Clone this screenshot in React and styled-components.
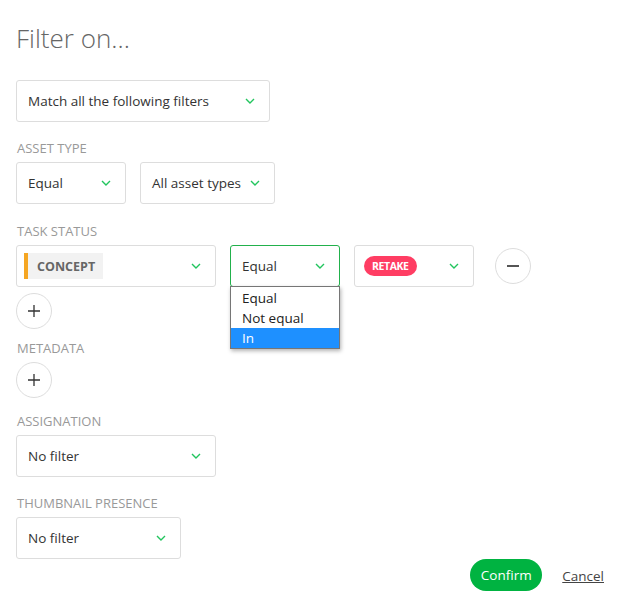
import React from "react";
import styled, { createGlobalStyle } from "styled-components";

const Global = createGlobalStyle`
  html, body { margin: 0; padding: 0; background: #fff; }
  body { font-family: "Open Sans", "Lato", sans-serif; color: #333; }
  * { box-sizing: border-box; }
`;

const Page = styled.div`
  width: 626px;
  height: 603px;
  padding: 20px 16px 0 16px;
  display: flex;
  flex-direction: column;
  position: relative;
`;

const Title = styled.h1`
  margin: 0;
  font-size: 26px;
  font-weight: 300;
  color: #666;
  line-height: 36px;
  letter-spacing: 0;
`;

const Label = styled.div`
  margin-top: ${(p) => p.$mt ?? 17}px;
  margin-bottom: 5px;
  margin-left: 1px;
  font-size: 13px;
  line-height: 18px;
  color: #999;
  text-transform: uppercase;
`;

const Row = styled.div`
  display: flex;
  align-items: center;
  gap: 14px;
  margin-top: ${(p) => p.$mt || 0}px;
`;

const SelectBox = styled.div`
  position: relative;
  width: ${(p) => p.$w}px;
  height: 42px;
  border: 1px solid ${(p) => (p.$focus ? "#22b14c" : "#ddd")};
  border-radius: 3px;
  display: flex;
  align-items: center;
  justify-content: space-between;
  padding: 0 14px 0 ${(p) => p.$pl ?? 11}px;
  font-size: 13.5px;
  color: #333;
  background: #fff;
`;

const Chevron = () => (
  <svg width="10" height="6" viewBox="0 0 10 6" fill="none">
    <path d="M1 1l4 4 4-4" stroke="#22c55e" strokeWidth="1.4" />
  </svg>
);

const StatusTag = styled.span`
  display: inline-flex;
  align-items: center;
  height: 26px;
  padding: 0 8px 0 9px;
  background: #f2f2f2;
  border-left: 4px solid #f5a623;
  font-size: 12.5px;
  font-weight: 700;
  color: #666;
  margin-left: -4px;
`;

const Pill = styled.span`
  display: inline-flex;
  align-items: center;
  height: 20px;
  padding: 0 8px;
  border-radius: 10px;
  background: #ff3d63;
  color: #fff;
  font-size: 10.5px;
  font-weight: 700;
  letter-spacing: -0.4px;
`;

const CircleButton = styled.button`
  width: 36px;
  height: 36px;
  border-radius: 50%;
  border: 1px solid #ddd;
  background: #fff;
  display: flex;
  align-items: center;
  justify-content: center;
  padding: 0;
  flex-shrink: 0;
  margin-top: ${(p) => p.$mt || 0}px;
  margin-left: ${(p) => p.$ml || 0}px;
`;

const Menu = styled.ul`
  position: absolute;
  top: 100%;
  left: -1px;
  width: 110px;
  margin: 0;
  padding: 1px 0 0;
  list-style: none;
  background: #fff;
  border: 1px solid #767676;
  box-shadow: 1px 2px 4px rgba(0, 0, 0, 0.3);
  z-index: 2;
`;

const MenuItem = styled.li`
  height: 20px;
  line-height: 20px;
  padding-left: 11px;
  font-size: 13.5px;
  color: ${(p) => (p.$active ? "#fff" : "#222")};
  background: ${(p) => (p.$active ? "#1e90ff" : "transparent")};
`;

const Footer = styled.div`
  display: flex;
  justify-content: flex-end;
  align-items: center;
  gap: 20px;
  margin-top: 0;
  padding-right: 6px;
`;

const Confirm = styled.button`
  height: 32px;
  width: 72px;
  padding: 0;
  border: none;
  border-radius: 16px;
  background: #00b341;
  color: #fff;
  font-family: inherit;
  font-size: 13.5px;
  font-weight: 500;
`;

const Cancel = styled.a`
  font-size: 13.5px;
  color: #444;
  text-decoration: underline;
  margin-top: 2px;
`;

const Plus = () => (
  <svg width="12" height="12" viewBox="0 0 12 12">
    <path d="M6 0v12M0 6h12" stroke="#333" strokeWidth="1.3" />
  </svg>
);

const Minus = () => (
  <svg width="12" height="12" viewBox="0 0 12 12">
    <path d="M0 6h12" stroke="#555" strokeWidth="2" />
  </svg>
);

export default function App() {
  return (
    <>
      <Global />
      <Page>
        <Title>Filter on...</Title>
        <Row $mt={24}>
          <SelectBox $w={254}>
            Match all the following filters <Chevron />
          </SelectBox>
        </Row>

        <Label>Asset type</Label>
        <Row>
          <SelectBox $w={110}>
            Equal <Chevron />
          </SelectBox>
          <SelectBox $w={135}>
            All asset types <Chevron />
          </SelectBox>
        </Row>

        <Label $mt={18}>Task status</Label>
        <Row>
          <SelectBox $w={200}>
            <StatusTag>CONCEPT</StatusTag>
            <Chevron />
          </SelectBox>
          <SelectBox $w={110} $focus>
            Equal <Chevron />
            <Menu>
              <MenuItem>Equal</MenuItem>
              <MenuItem>Not equal</MenuItem>
              <MenuItem $active>In</MenuItem>
            </Menu>
          </SelectBox>
          <SelectBox $w={120} $pl={9}>
            <Pill>RETAKE</Pill>
            <Chevron />
          </SelectBox>
          <CircleButton $ml={7}>
            <Minus />
          </CircleButton>
        </Row>
        <CircleButton $mt={6}>
          <Plus />
        </CircleButton>

        <Label $mt={10}>Metadata</Label>
        <CircleButton>
          <Plus />
        </CircleButton>

        <Label $mt={14}>Assignation</Label>
        <Row>
          <SelectBox $w={200}>
            No filter <Chevron />
          </SelectBox>
        </Row>

        <Label>Thumbnail presence</Label>
        <Row>
          <SelectBox $w={165}>
            No filter <Chevron />
          </SelectBox>
        </Row>

        <Footer>
          <Confirm>Confirm</Confirm>
          <Cancel>Cancel</Cancel>
        </Footer>
      </Page>
    </>
  );
}
